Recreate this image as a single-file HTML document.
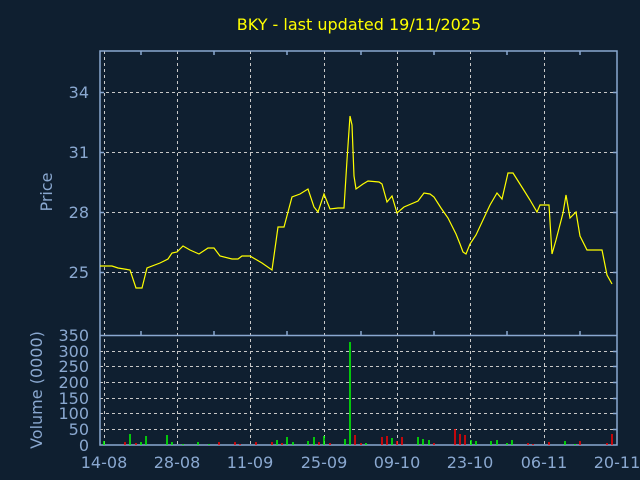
<!DOCTYPE html>
<html><head><meta charset="utf-8"><style>
html,body{margin:0;padding:0;background:#0f1f30;}
svg{display:block;font-family:"DejaVu Sans","Liberation Sans",sans-serif;}
</style></head><body>
<svg width="640" height="480" viewBox="0 0 640 480">
<rect width="640" height="480" fill="#0f1f30"/>
<text x="359" y="30" fill="#ffff00" font-size="16" text-anchor="middle">BKY - last updated 19/11/2025</text>
<g stroke="#c8c8c8" stroke-width="1" stroke-dasharray="3,3" fill="none">
<path d="M104.5 51V445M177.5 51V445M250.5 51V445M324.5 51V445M397.5 51V445M470.5 51V445M544.5 51V445"/>
<path d="M100 92.5H617M100 152.5H617M100 212.5H617M100 272.5H617"/>
<path d="M100 351.5H617M100 366.5H617M100 382.5H617M100 398.5H617M100 413.5H617M100 429.5H617"/>
</g>
<g stroke="#8aa8d0" stroke-width="1.5" fill="none">
<path d="M100 51H617V445H100Z"/>
<path d="M100 335.5H617"/>
<path d="M141 51v4M214 51v4M287 51v4M361 51v4M434 51v4M507 51v4M580 51v4M141 335v-4M214 335v-4M287 335v-4M361 335v-4M434 335v-4M507 335v-4M580 335v-4"/>
<path d="M100 92.5h4M100 152.5h4M100 212.5h4M100 272.5h4M613 92.5h4M613 152.5h4M613 212.5h4M613 272.5h4"/>
<path d="M613 351.5h4M613 366.5h4M613 382.5h4M613 398.5h4M613 413.5h4M613 429.5h4"/>
</g>
<g fill="#8aa8d0" font-size="16" text-anchor="end">
<text x="89" y="98">34</text><text x="89" y="158">31</text><text x="89" y="218">28</text><text x="89" y="278">25</text>
<text x="89" y="341">350</text><text x="89" y="357">300</text><text x="89" y="372">250</text><text x="89" y="388">200</text><text x="89" y="404">150</text><text x="89" y="419">100</text><text x="89" y="435">50</text><text x="89" y="451">0</text>
</g>
<g fill="#8aa8d0" font-size="16" text-anchor="middle">
<text x="104" y="468">14-08</text><text x="177" y="468">28-08</text><text x="250" y="468">11-09</text><text x="324" y="468">25-09</text><text x="397" y="468">09-10</text><text x="470" y="468">23-10</text><text x="544" y="468">06-11</text><text x="617" y="468">20-11</text>
<text transform="translate(52,192) rotate(-90)">Price</text>
<text transform="translate(42,390) rotate(-90)">Volume (0000)</text>
</g>
<polyline fill="none" stroke="#ffff00" stroke-width="1.2" points="100,266 112,266 118,268 130,270 136,288 142,288 147,268 160,263 168,259 172,253 177,252 183,246 190,250 199,254 208,248 214,248 220,256 232,259 238,259 242,256 250,256 262,263 272,270 278,227 284,227 292,197 300,194 308,189 314,207 318,212 324,194 330,209 338,208 344,208 347,160 350,116 352,125 354,176 356,189 363,184 368,181 379,182 382,184 387,202 392,196 397,213 404,207 418,201 424,193 430,194 434,197 441,208 448,218 456,234 460,244 463,252 466,254 470,244 476,235 490,205 497,193 502,199 508,173 513,173 525,192 530,200 537,212 540,205 545,205 549,205 552,254 556,240 563,213 566,195 570,218 574,214 576,212 580,236 587,250 600,250 602,250 607,275 612,284"/>
<g stroke-width="1.5">
<path stroke="#00ff00" d="M104 445V441M130 445V434M141 445V442M146 445V436M167 445V435M172 445V442M183 445V444M198 445V442M209 445V444M277 445V440M287 445V437M293 445V442M308 445V441M314 445V437M324 445V436M345 445V439M350 445V342M366 445V443M392 445V438M418 445V437M423 445V439M429 445V440M471 445V440M476 445V441M491 445V441M497 445V440M507 445V443M512 445V440M565 445V441M575 445V444"/>
<path stroke="#ff0000" d="M125 445V442M136 445V443M219 445V442M235 445V442M240 445V444M256 445V442M272 445V442M282 445V443M319 445V442M330 445V443M355 445V435M361 445V443M382 445V437M387 445V436M397 445V441M402 445V437M434 445V443M455 445V429M460 445V434M465 445V435M528 445V443M533 445V444M549 445V442M580 445V441M607 445V443M612 445V434"/>
</g>
</svg>
</body></html>
